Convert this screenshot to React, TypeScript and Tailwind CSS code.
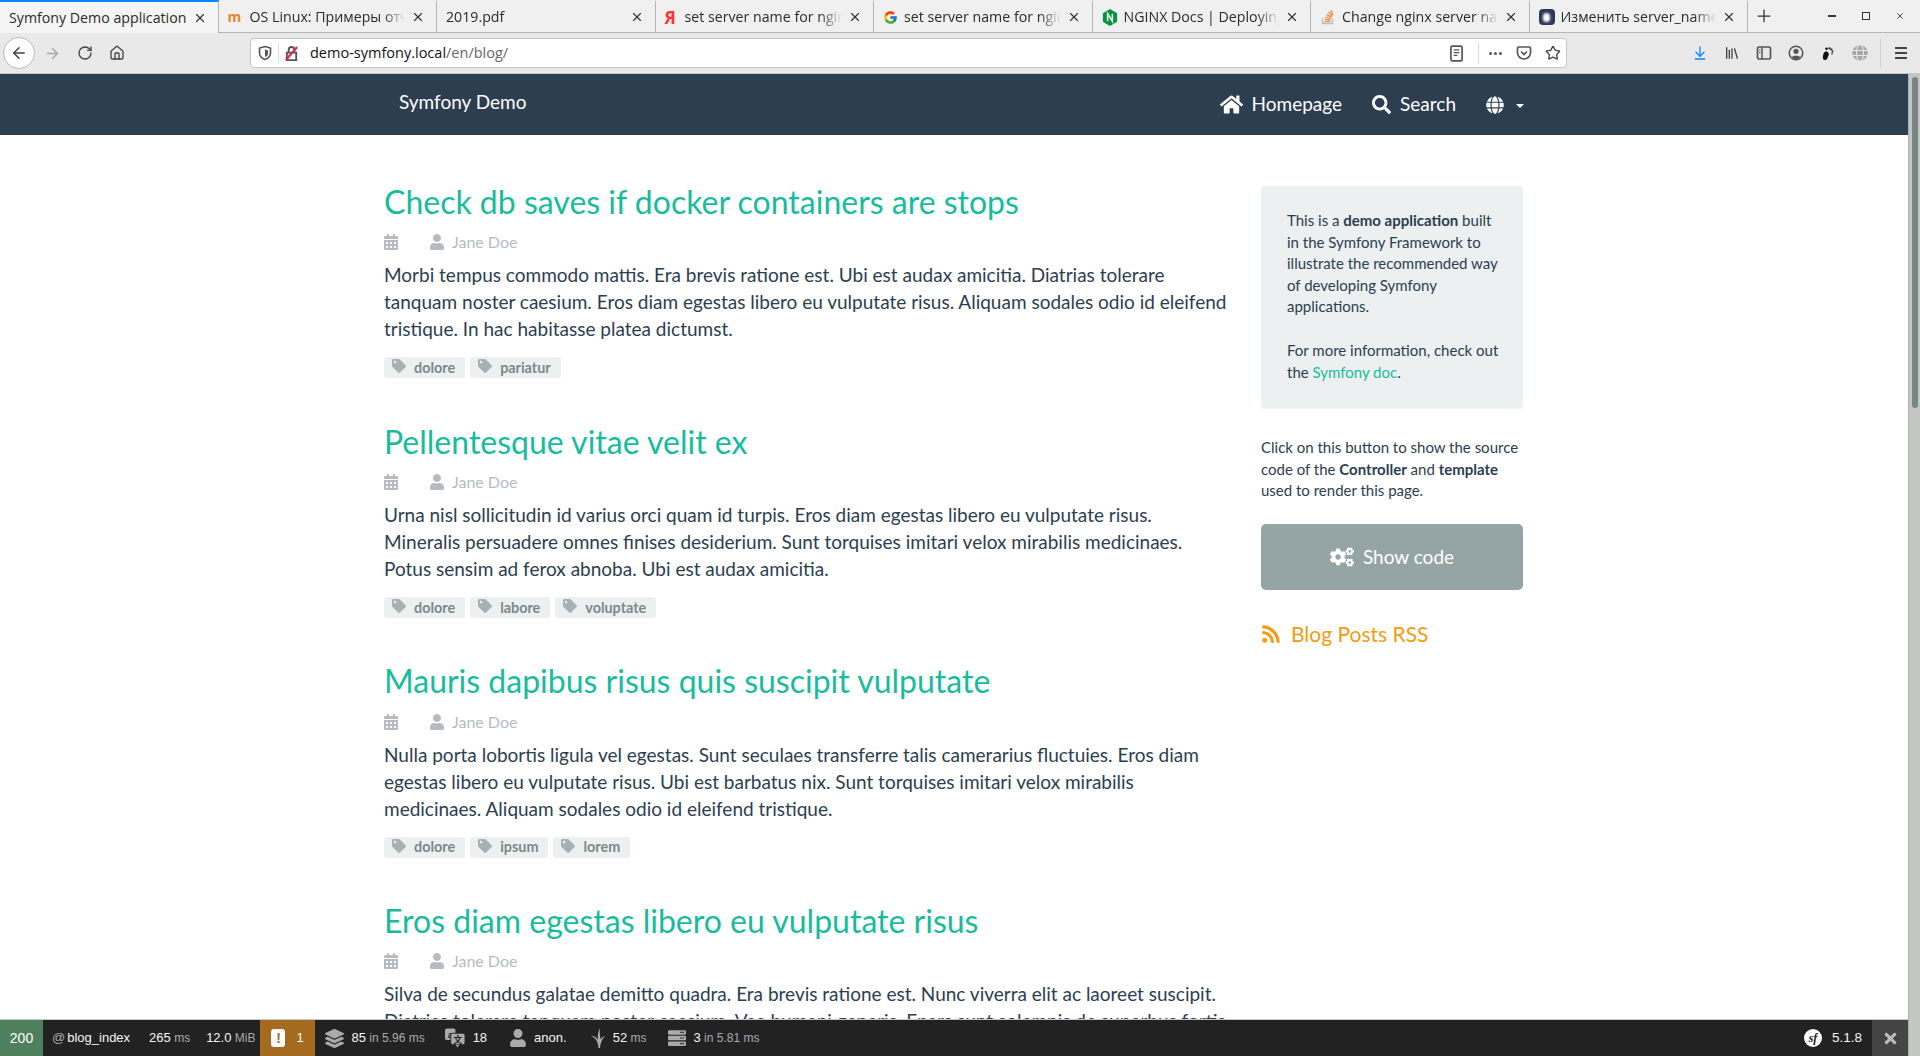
import { FaHome, FaSearch, FaGlobe, FaCalendarAlt, FaUser, FaTag, FaCogs, FaRss, FaTimes, FaServer, FaLayerGroup } from "react-icons/fa";
import { FcGoogle } from "react-icons/fc";
import { ArrowLeft, ArrowRight, RotateCw, Home, X, Plus, Star, ArrowDownToLine, Library } from "lucide-react";

const tabs = [
  { title: "Symfony Demo application", icon: null, active: true },
  { title: "OS Linux: Примеры отчётов", icon: <span className="w-[16px] text-[14px] font-bold leading-none text-[#e8842c]">m</span> },
  { title: "2019.pdf", icon: null },
  { title: "set server name for nginx", icon: <span className="w-[14px] text-[17px] font-bold leading-none text-[#f33]">Я</span> },
  { title: "set server name for nginx", icon: <FcGoogle size={15} /> },
  { title: "NGINX Docs | Deploying NGINX", icon: <NginxIcon /> },
  { title: "Change nginx server name", icon: <StackIcon /> },
  { title: "Изменить server_name", icon: <span className="flex h-4 w-4 items-center justify-center rounded-sm bg-[#2e3a5c]"><span className="h-[9px] w-[7px] rounded-full bg-white blur-[1px]" /></span> },
];

const posts = [
  {
    title: "Check db saves if docker containers are stops",
    lines: [
      "Morbi tempus commodo mattis. Era brevis ratione est. Ubi est audax amicitia. Diatrias tolerare",
      "tanquam noster caesium. Eros diam egestas libero eu vulputate risus. Aliquam sodales odio id eleifend",
      "tristique. In hac habitasse platea dictumst.",
    ],
    tags: ["dolore", "pariatur"],
  },
  {
    title: "Pellentesque vitae velit ex",
    lines: [
      "Urna nisl sollicitudin id varius orci quam id turpis. Eros diam egestas libero eu vulputate risus.",
      "Mineralis persuadere omnes finises desiderium. Sunt torquises imitari velox mirabilis medicinaes.",
      "Potus sensim ad ferox abnoba. Ubi est audax amicitia.",
    ],
    tags: ["dolore", "labore", "voluptate"],
  },
  {
    title: "Mauris dapibus risus quis suscipit vulputate",
    lines: [
      "Nulla porta lobortis ligula vel egestas. Sunt seculaes transferre talis camerarius fluctuies. Eros diam",
      "egestas libero eu vulputate risus. Ubi est barbatus nix. Sunt torquises imitari velox mirabilis",
      "medicinaes. Aliquam sodales odio id eleifend tristique.",
    ],
    tags: ["dolore", "ipsum", "lorem"],
  },
  {
    title: "Eros diam egestas libero eu vulputate risus",
    lines: [
      "Silva de secundus galatae demitto quadra. Era brevis ratione est. Nunc viverra elit ac laoreet suscipit.",
      "Diatrias tolerare tanquam noster caesium. Vae humani generis. Epars sunt solemnis de superbus fortis.",
    ],
    tags: [],
  },
];

function NginxIcon() {
  return (
    <svg viewBox="0 0 16 18" className="h-[17px] w-4 shrink-0">
      <path d="M8 0l7.5 4.5v9L8 18 .5 13.5v-9z" fill="#009639" />
      <path d="M5.5 13V5l5 8V5" fill="none" stroke="#fff" strokeWidth="1.6" />
    </svg>
  );
}

function StackIcon() {
  return (
    <svg viewBox="0 0 16 16" className="h-4 w-4 shrink-0">
      <path d="M2.5 9.5v5h10v-5" fill="none" stroke="#bcbbbb" strokeWidth="1.3" />
      <path d="M4.5 12.5h6M4.7 10.3l5.8.6M5.3 8l5.6 1.5M6.5 5.5l5 2.8M8.5 3l3.6 4.4M11 1l1.8 5.4" stroke="#f48024" strokeWidth="1.2" />
    </svg>
  );
}

function ShieldIcon() {
  return (
    <svg viewBox="0 0 16 16" className="h-4 w-4">
      <path d="M8 1.5l5.5 1.6v5c0 3.2-2.4 5.3-5.5 6.4-3.1-1.1-5.500-3.200-5.500-6.400v-5z" fill="none" stroke="#555" strokeWidth="1.6" />
      <path d="M8 4.500l3 .9v3c0 1.700-1.300 2.800-3 3.500z" fill="#555" />
    </svg>
  );
}

function PocketIcon() {
  return (
    <svg viewBox="0 0 16 16" className="h-4 w-4">
      <path d="M2.500 2h11a1 1 0 011 1v4.500a6.500 6.500 0 01-13 0V3a1 1 0 011-1z" fill="none" stroke="#555" strokeWidth="1.700" />
      <path d="M5 6.500l3 3 3-3" fill="none" stroke="#555" strokeWidth="1.700" />
    </svg>
  );
}

function ReaderIcon() {
  return (
    <svg viewBox="0 0 14 18" className="h-[17px] w-[13px]">
      <rect x="1" y="1" width="12" height="16" rx="1.500" fill="none" stroke="#555" strokeWidth="1.800" />
      <path d="M4 5h6M4 8h6M4 11h4" stroke="#555" strokeWidth="1.300" />
    </svg>
  );
}

function SidebarIcon() {
  return (
    <svg viewBox="0 0 16 16" className="h-4 w-4">
      <rect x="1.500" y="2" width="13" height="12" rx="1.500" fill="none" stroke="#555" strokeWidth="1.700" />
      <path d="M6 2v12" stroke="#555" strokeWidth="1.500" />
      <path d="M3 5h1.500M3 7.500h1.500" stroke="#555" strokeWidth="1" />
    </svg>
  );
}

function AccountIcon() {
  return (
    <svg viewBox="0 0 16 16" className="h-4 w-4">
      <circle cx="8" cy="8" r="6.800" fill="none" stroke="#555" strokeWidth="1.500" />
      <circle cx="8" cy="6.300" r="2.600" fill="#555" />
      <path d="M3.500 12.500c1-2.500 8-2.500 9 0L8 14.500z" fill="#555" />
    </svg>
  );
}

function FootIcon() {
  return (
    <svg viewBox="0 0 16 16" className="h-4 w-4">
      <path d="M5 15c-2 0-2.500-2-2-4s.5-4 2.500-4.500S9.500 8 8.500 10.500 7 15 5 15z" fill="#111" />
      <circle cx="6.500" cy="3.800" r="1.300" fill="#111" />
      <circle cx="9.500" cy="3.300" r="1.100" fill="#111" />
      <circle cx="11.500" cy="4.500" r="1" fill="#111" />
      <circle cx="12.500" cy="6.500" r=".9" fill="#111" />
      <circle cx="12" cy="8.800" r=".8" fill="#111" />
    </svg>
  );
}

function MenuIcon() {
  return (
    <svg viewBox="0 0 12 12" className="h-[12px] w-[12px]">
      <path d="M0 1h12M0 6h12M0 11h12" stroke="#444" strokeWidth="2" />
    </svg>
  );
}

function TranslationIcon() {
  return (
    <svg viewBox="0 0 22 20" className="h-[20px] w-[21px]">
      <rect x="0" y="0" width="11" height="12" rx="2" fill="#aaa" />
      <text x="5.500" y="9.500" textAnchor="middle" fontSize="9" fontWeight="700" fill="#222" fontFamily="Liberation Sans">a</text>
      <rect x="6" y="5" width="15" height="12" rx="2" fill="#aaa" stroke="#222" strokeWidth="1" />
      <path d="M11 17l2 3 2-3z" fill="#aaa" />
      <text x="13.500" y="15" textAnchor="middle" fontSize="9" fontWeight="700" fill="#222" fontFamily="Noto Sans CJK SC">文</text>
    </svg>
  );
}

function TwigIcon() {
  return (
    <svg viewBox="0 0 16 20" className="h-[20px] w-[16px]">
      <path d="M8.500 20C8 14 6.500 10.500 1 7.500c3.500.5 5.500 2 6.800 4.500C7.500 7.500 8 3.500 10 0c-.5 4-.2 8 .8 11.500 1-1.800 2.400-3 4.200-3.500-2.500 3-4.800 6.500-5 12z" fill="#aaa" />
    </svg>
  );
}

function Tab({ title, icon, active }: { title: string; icon: React.ReactNode; active?: boolean }) {
  return (
    <div className={`flex h-full w-[218.5px] shrink-0 items-center gap-[6px] border-r border-t-2 border-r-[#b5b5b5] pl-[9px] pr-[11px] ${active ? "border-t-[#0a84ff] bg-[#f5f5f5]" : "border-b border-t-transparent border-b-[#b5b5b5] bg-[#f0f0f0]"}`}>
      {icon}
      <span className={`min-w-0 flex-1 overflow-hidden whitespace-nowrap text-[14.2px] text-[#2b2b2b] ${active ? "" : "[mask-image:linear-gradient(to_right,#000_86%,transparent)]"}`}>
        {title}
      </span>
      <X size={14} strokeWidth={2} className="shrink-0 text-[#333]" />
    </div>
  );
}

function BrowserChrome() {
  return (
    <div className="shrink-0 font-['Open_Sans',sans-serif]">
      <div className="flex h-[33px] bg-[#f0f0f0]">
        {tabs.map((t, i) => (
          <Tab key={i} title={t.title} icon={t.icon} active={t.active} />
        ))}
        <div className="flex h-full flex-1 items-center border-b border-[#b5b5b5] pl-[6px] text-[#333]">
          <Plus size={20} strokeWidth={1.5} />
          <div className="ml-auto flex items-center pr-[15px]">
            <span className="h-[1.5px] w-[8px] bg-[#333]" />
            <span className="ml-[26px] h-[8px] w-[8px] border-[1.5px] border-[#333]" />
            <X size={10} strokeWidth={2} className="ml-[25px]" />
          </div>
        </div>
      </div>
      <div className="flex h-[41px] items-center border-b border-[#c8c8c8] bg-[#e9e9e9] text-[#444]">
        <div className="ml-[3px] flex h-[32px] w-[32px] items-center justify-center rounded-full border border-[#b8b8b8] bg-white">
          <ArrowLeft size={18} strokeWidth={2} />
        </div>
        <ArrowRight size={17} strokeWidth={2} className="ml-[9px] text-[#a8a8a8]" />
        <RotateCw size={16} strokeWidth={2} className="ml-[16px]" />
        <Home size={16} strokeWidth={2} className="ml-[16px]" />
        <div className="ml-[125px] flex h-[30px] w-[1317px] items-center rounded border border-[#c4c4c4] bg-white pl-[6px] pr-[5px]">
          <ShieldIcon />
          <div className="mx-[5px] h-[20px] w-px bg-[#ddd]" />
          <svg viewBox="0 0 16 16" className="h-[15px] w-[15px]">
            <path d="M3 7h10v8H3zM5 7V4a3 3 0 016 0v3" fill="none" stroke="#555" strokeWidth="2" />
            <path d="M2 15L14 1" stroke="#e22850" strokeWidth="2.4" />
          </svg>
          <span className="ml-[11px] text-[14.5px] text-[#111]">
            demo-symfony.local<span className="text-[#666]">/en/blog/</span>
          </span>
          <div className="ml-auto flex items-center">
            <ReaderIcon />
            <div className="ml-[15px] mr-[10px] h-[22px] w-px bg-[#ddd]" />
            <span className="flex gap-[2px]">
              <span className="h-[3px] w-[3px] rounded-full bg-[#555]" />
              <span className="h-[3px] w-[3px] rounded-full bg-[#555]" />
              <span className="h-[3px] w-[3px] rounded-full bg-[#555]" />
            </span>
            <span className="ml-[14px]"><PocketIcon /></span>
            <Star size={16} strokeWidth={2} className="ml-[13px]" />
          </div>
        </div>
        <ArrowDownToLine size={16} strokeWidth={2} className="ml-[125px] text-[#0a84ff]" />
        <Library size={16} strokeWidth={2} className="ml-[16px]" />
        <span className="ml-[16px]"><SidebarIcon /></span>
        <span className="ml-[16px]"><AccountIcon /></span>
        <span className="ml-[16px]"><FootIcon /></span>
        <FaGlobe size={16} className="ml-[16px] text-[#a8a8a8]" />
        <div className="ml-[12px] h-[30px] w-px bg-[#d4d4d4]" />
        <span className="ml-[14px]"><MenuIcon /></span>
      </div>
    </div>
  );
}

function Post({ post }: { post: (typeof posts)[number] }) {
  return (
    <article className="h-[239.6px]">
      <h2 className="text-[32px] leading-[38.4px] text-[#18bc9c]">{post.title}</h2>
      <div className="mt-[9px] flex h-[24px] items-center text-[16px] text-[#b4bcc2]">
        <FaCalendarAlt size={16} className="-ml-[1px]" />
        <FaUser size={16} className="ml-[30px]" />
        <span className="ml-[7px]">Jane Doe</span>
      </div>
      <div className="mt-[7px] text-[19px] leading-[27px] text-[#2c3e50]">
        {post.lines.map((l) => (
          <p key={l} className="whitespace-nowrap">{l}</p>
        ))}
      </div>
      <div className="mt-[15px] flex gap-[5px]">
        {post.tags.map((t) => (
          <span key={t} className="flex h-[21px] items-center rounded-[3px] bg-[#ecf0f1] pl-[8px] pr-[10px] text-[14.4px] font-bold text-[#7b8a8b]">
            <FaTag size={14} className="mb-[3px] mr-[8px] text-[#a5b1b2]" />
            {t}
          </span>
        ))}
      </div>
    </article>
  );
}

function Sidebar() {
  return (
    <aside className="ml-[33px] mt-[51px] w-[262px] shrink-0 text-[15px] leading-[21.6px] text-[#2c3e50]">
      <div className="rounded-[4px] bg-[#ecf0f1] pb-[26px] pl-[26px] pr-[19px] pt-[24px]">
        <p>This is a <b>demo application</b> built in the Symfony Framework to illustrate the recommended way of developing Symfony applications.</p>
        <p className="mt-[22px]">For more information, check out the <span className="text-[#18bc9c]">Symfony doc</span>.</p>
      </div>
      <p className="mt-[28px]">Click on this button to show the source code of the <b>Controller</b> and <b>template</b> used to render this page.</p>
      <div className="mt-[22px] flex h-[66px] items-center justify-center gap-[9px] rounded-[5px] bg-[#95a5a6] text-[19px] text-white">
        <FaCogs size={24} />
        Show code
      </div>
      <div className="mt-[30px] flex items-center gap-[10px] text-[21px] leading-[28px] text-[#f39c12]">
        <FaRss size={20} />
        Blog Posts RSS
      </div>
    </aside>
  );
}

function DebugItem({ value, unit, icon, pr = 20 }: { value: string; unit?: string; icon?: React.ReactNode; pr?: number }) {
  return (
    <div className="flex items-center gap-[7px]" style={{ paddingRight: pr }}>
      {icon}
      <span className="text-[#f5f5f5]">{value}{unit && <span className="text-[12px] text-[#aaa]"> {unit}</span>}</span>
    </div>
  );
}

function DebugBar() {
  return (
    <div className="flex h-[37px] shrink-0 items-center border-t border-[#c8c8c8] bg-[#222] font-['Liberation_Sans',sans-serif] text-[13px]">
      <div className="flex h-full w-[43px] items-center justify-center bg-[#4f805d] text-[14px] text-white">200</div>
      <div className="flex items-center pl-[9px] pr-[19px] text-[#f5f5f5]">
        <span className="mr-[2px] text-[#aaa]">@</span>blog_index
      </div>
      <DebugItem value="265" unit="ms" pr={16} />
      <DebugItem value="12.0" unit="MiB" pr={5} />
      <div className="mr-[10px] flex h-full w-[55px] items-center gap-[11px] bg-[#a46a1f] pl-[11px] text-[#f5f5f5]">
        <span className="flex h-[18px] w-[14px] items-center justify-center rounded-[3px] bg-white text-[14px] font-bold text-[#a46a1f]">!</span>
        1
      </div>
      <DebugItem value="85" unit="in 5.96 ms" icon={<FaLayerGroup size={19} className="text-[#aaa]" />} />
      <DebugItem value="18" icon={<TranslationIcon />} pr={22} />
      <DebugItem value="anon." icon={<FaUser size={18} className="text-[#aaa]" />} pr={23} />
      <DebugItem value="52" unit="ms" icon={<TwigIcon />} pr={22} />
      <DebugItem value="3" unit="in 5.81 ms" icon={<FaServer size={18} className="text-[#aaa]" />} />
      <div className="ml-auto flex items-center gap-[10px] pr-[10px] text-[13.5px] text-[#f5f5f5]">
        <span className="flex h-[18px] w-[18px] items-center justify-center rounded-full bg-white font-['Liberation_Serif',serif] text-[12px] font-bold italic text-[#222]">sf</span>
        5.1.8
      </div>
      <div className="flex h-full w-[36px] items-center justify-center bg-[#444]">
        <FaTimes size={17} className="text-[#bbb]" />
      </div>
    </div>
  );
}

export default function App() {
  return (
    <div className="flex h-screen flex-col overflow-hidden bg-white font-['Lato',sans-serif]">
      <BrowserChrome />
      <div className="flex min-h-0 flex-1">
        <div className="flex min-w-0 flex-1 flex-col">
          <div className="min-h-0 flex-1 overflow-hidden">
            <header className="h-[61px] bg-[#2c3e50] text-white">
              <div className="mx-auto flex h-full w-[1140px] items-center pl-[15px]">
                <span className="mb-[5px] text-[19px]">Symfony Demo</span>
                <div className="ml-auto flex items-center text-[19px]">
                  <FaHome size={23} />
                  <span className="ml-[9px]">Homepage</span>
                  <FaSearch size={19} className="ml-[30px]" />
                  <span className="ml-[9px]">Search</span>
                  <FaGlobe size={18} className="ml-[30px]" />
                  <span className="ml-[12px] mt-[2px] border-x-[4px] border-t-[4px] border-x-transparent border-t-white" />
                </div>
              </div>
            </header>
            <main className="mx-auto flex w-[1140px]">
              <div className="mt-[48px] w-[844px] shrink-0">
                {posts.map((p) => (
                  <Post key={p.title} post={p} />
                ))}
              </div>
              <Sidebar />
            </main>
          </div>
          <DebugBar />
        </div>
        <div className="flex w-[12px] shrink-0 justify-center border-l border-[#b0b0b0] bg-[#c4c6c4] pt-[3px]">
          <div className="h-[331px] w-[6px] rounded-full bg-[#7a8585]" />
        </div>
      </div>
    </div>
  );
}
